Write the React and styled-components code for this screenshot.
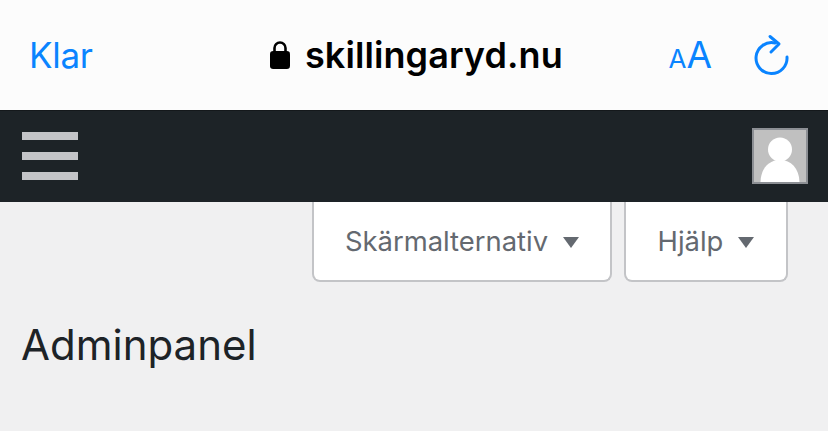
import React from "react";
import styled, { createGlobalStyle } from "styled-components";

const Global = createGlobalStyle`
  html, body { margin: 0; padding: 0; background: #f0f0f1; }
  body { font-family: Inter, "Liberation Sans", sans-serif; }
`;
const Page = styled.div`
  width: 828px;
  height: 431px;
  overflow: hidden;
  background: #f0f0f1;
  display: flex;
  flex-direction: column;
`;
const BrowserBar = styled.header`
  height: 110px;
  flex: none;
  box-sizing: border-box;
  background: #fcfcfc;
  display: grid;
  grid-template-columns: 241px auto 1fr;
  align-items: center;
  padding: 0 39px 1px 29px;
`;
const Done = styled.span`
  font-size: 35px;
  line-height: 1.2;
  color: #0a84ff;
  letter-spacing: -0.3px;
`;
const Address = styled.div`
  display: flex;
  align-items: center;
  gap: 15px;
  font-size: 36px;
  font-weight: 600;
  color: #000;
  letter-spacing: 0.08px;
`;
const Tools = styled.div`
  display: flex;
  align-items: center;
  justify-content: flex-end;
  gap: 41px;
`;
const TextSize = styled.div`
  display: flex;
  align-items: baseline;
  color: #0a84ff;
  line-height: 1;
`;
const SizeLetter = styled.span`
  font-size: ${(p) => p.$size}px;
  font-weight: 400;
`;
const AdminBar = styled.nav`
  height: 92px;
  flex: none;
  box-sizing: border-box;
  background: #1d2327;
  border-top: 1px solid #14181b;
  display: flex;
  align-items: center;
  justify-content: space-between;
  padding: 0 20px 2px 22px;
`;
const Burger = styled.div`
  width: 56px;
  display: flex;
  flex-direction: column;
  gap: 12px;
`;
const BurgerLine = styled.span`
  display: block;
  height: 8px;
  background: #c3c4c7;
`;
const Avatar = styled.div`
  width: 56px;
  height: 56px;
  box-sizing: border-box;
  border: 2px solid #8c8f94;
  background: #c0c0c0;
  display: flex;
`;
const Tabs = styled.div`
  display: flex;
  justify-content: flex-end;
  gap: 12px;
  padding-right: 40px;
`;
const Tab = styled.button`
  width: ${(p) => p.$width}px;
  height: 80px;
  box-sizing: border-box;
  background: #fff;
  border: 2px solid #c3c4c7;
  border-top: 0;
  border-radius: 0 0 8px 8px;
  padding: 0;
  display: flex;
  align-items: center;
  justify-content: center;
  gap: 15px;
  font-family: inherit;
  font-size: 27.4px;
  color: #646970;
`;
const Caret = styled.span`
  width: 0;
  height: 0;
  border-left: 8px solid transparent;
  border-right: 8px solid transparent;
  border-top: 11px solid #646970;
  margin-top: 2px;
`;
const Title = styled.h1`
  margin: 36px 0 0 21px;
  font-size: 42px;
  line-height: 54px;
  font-weight: 400;
  color: #1d2327;
`;

const Lock = () => (
  <svg width="20" height="29" viewBox="0 0 20 29" aria-hidden="true">
    <path d="M4.5 12V8a5.5 5.5 0 0 1 11 0v4" fill="none" stroke="#000" strokeWidth="2.6" />
    <rect x="0" y="11" width="20" height="18" rx="3.2" fill="#000" />
  </svg>
);
const Reload = () => (
  <svg width="36" height="42" viewBox="0 0 36 42" fill="none" aria-hidden="true">
    <path
      d="M34 23A15.500 15.500 0 1 1 22 9"
      stroke="#0a84ff"
      strokeWidth="3"
      strokeLinecap="round"
    />
    <path
      d="M17 2.500L26 10 18 18"
      stroke="#0a84ff"
      strokeWidth="3"
      strokeLinecap="round"
      strokeLinejoin="round"
    />
  </svg>
);
const Person = () => (
  <svg width="52" height="52" viewBox="0 0 52 52" aria-hidden="true">
    <circle cx="26" cy="19.500" r="12" fill="#fff" />
    <path d="M6.500 52C7 38 15 30 26 30s19 8 19.500 22z" fill="#fff" />
  </svg>
);

export default function App() {
  return (
    <Page>
      <Global />
      <BrowserBar>
        <Done>Klar</Done>
        <Address>
          <Lock />
          <span>skillingaryd.nu</span>
        </Address>
        <Tools>
          <TextSize>
            <SizeLetter $size={26}>A</SizeLetter>
            <SizeLetter $size={37}>A</SizeLetter>
          </TextSize>
          <Reload />
        </Tools>
      </BrowserBar>
      <AdminBar>
        <Burger>
          <BurgerLine />
          <BurgerLine />
          <BurgerLine />
        </Burger>
        <Avatar>
          <Person />
        </Avatar>
      </AdminBar>
      <Tabs>
        <Tab $width={300}>
          Skärmalternativ
          <Caret />
        </Tab>
        <Tab $width={164}>
          Hjälp
          <Caret />
        </Tab>
      </Tabs>
      <Title>Adminpanel</Title>
    </Page>
  );
}
